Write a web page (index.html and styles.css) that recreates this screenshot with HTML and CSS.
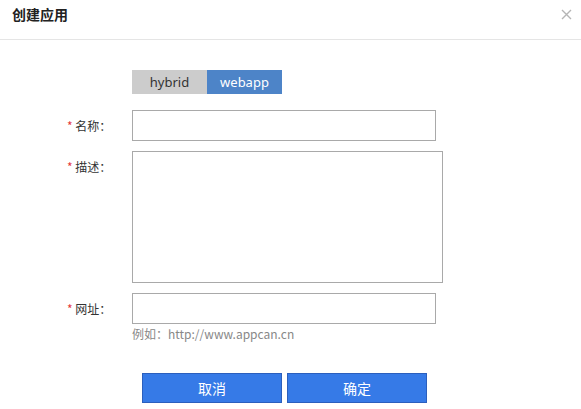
FILE: index.html
```html
<!DOCTYPE html>
<html lang="zh">
<head>
<meta charset="utf-8">
<link rel="stylesheet" href="styles.css">
</head>
<body>
<div class="dialog">
  <div class="header">
    <span class="title">创建应用</span>
    <span class="close">
      <svg width="11" height="11" viewBox="0 0 11 11"><path d="M1 1L10 10M10 1L1 10" stroke="#b5b5b5" stroke-width="1.4" fill="none"/></svg>
    </span>
  </div>
  <div class="body">
    <div class="tabs">
      <span class="tab">hybrid</span>
      <span class="tab active">webapp</span>
    </div>
    <div class="row">
      <label class="label"><span class="star">*</span> 名称：</label>
      <input class="input" type="text">
    </div>
    <div class="row">
      <label class="label"><span class="star">*</span> 描述：</label>
      <textarea class="textarea"></textarea>
    </div>
    <div class="row">
      <label class="label"><span class="star">*</span> 网址：</label>
      <div class="field">
        <input class="input" type="text">
        <div class="hint">例如：http://www.appcan.cn</div>
      </div>
    </div>
    <div class="buttons">
      <button class="btn">取消</button>
      <button class="btn">确定</button>
    </div>
  </div>
</div>
</body>
</html>
```
FILE: styles.css
```css
html, body {
  margin: 0;
  padding: 0;
  background: #fff;
}
body {
  font-family: "Noto Sans", "Noto Sans CJK SC", sans-serif;
  color: #333;
}
.dialog {
  width: 581px;
  height: 409px;
  overflow: hidden;
}
.header {
  height: 39px;
  border-bottom: 1px solid #e5e5e5;
  display: flex;
  align-items: flex-start;
  justify-content: space-between;
  box-sizing: content-box;
}
.title {
  font-family: "Noto Sans CJK SC", sans-serif;
  font-size: 14px;
  font-weight: 700;
  line-height: 20px;
  padding: 4px 0 0 12px;
  color: #222;
}
.close {
  padding: 9px 9px 0 0;
  line-height: 0;
}
.body {
  padding-top: 30px;
}
.tabs {
  display: flex;
  margin-left: 132px;
  margin-bottom: 16px;
}
.tab {
  width: 75px;
  height: 24px;
  line-height: 24px;
  text-align: center;
  font-size: 13px;
  background: #cccccc;
  color: #333;
}
.tab.active {
  background: #4d84c8;
  color: #fff;
}
.row {
  display: flex;
  align-items: flex-start;
  margin-bottom: 10px;
}
.label {
  width: 65px;
  padding-left: 67px;
  font-family: "Noto Sans CJK SC", sans-serif;
  font-size: 12px;
  line-height: 31px;
  color: #333;
  white-space: nowrap;
}
.star {
  color: #e4393c;
}
.input {
  width: 304px;
  height: 31px;
  box-sizing: border-box;
  border: 1px solid #a9a9a9;
  margin: 0;
  padding: 0 6px;
  outline: none;
  font-size: 12px;
}
.textarea {
  width: 311px;
  height: 132px;
  box-sizing: border-box;
  border: 1px solid #a9a9a9;
  margin: 0;
  padding: 4px;
  resize: none;
  outline: none;
  display: block;
}
.field {
  display: flex;
  flex-direction: column;
}
.hint {
  font-family: "Noto Sans CJK SC", sans-serif;
  font-size: 12px;
  color: #888;
  line-height: 18px;
  margin-top: 1px;
}
.buttons {
  display: flex;
  gap: 5px;
  margin-left: 142px;
  margin-top: 30px;
}
.btn {
  width: 140px;
  height: 30px;
  box-sizing: border-box;
  background: #367ae7;
  border: 1px solid #2b5fbd;
  color: #fff;
  font-family: "Noto Sans CJK SC", sans-serif;
  font-size: 14px;
  margin: 0;
  padding: 0;
}
```
